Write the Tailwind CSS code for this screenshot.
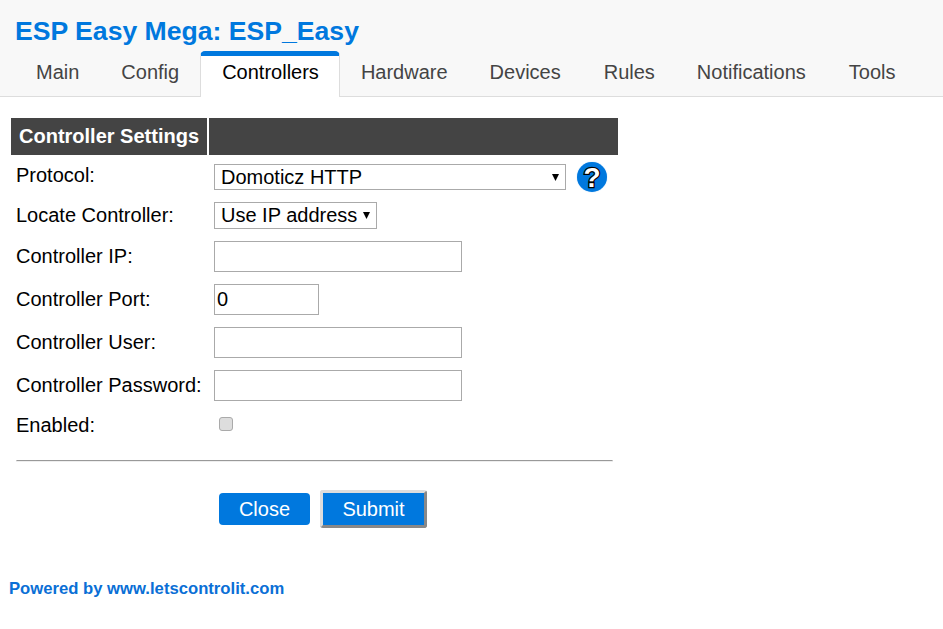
<!DOCTYPE html>
<html lang="en">
  <head>
    <meta charset="UTF-8" />
    <meta name="viewport" content="width=device-width, initial-scale=1.0" />
    <title>ESP Easy Mega: ESP_Easy</title>
    <script src="https://cdn.jsdelivr.net/npm/@tailwindcss/browser@4"></script>
  </head>
  <body class="bg-white text-[20px] leading-[23px] text-black font-['Liberation_Sans',Arial,sans-serif]">
    <header class="h-[97px] bg-[#f8f8f8] border-b border-[#ddd]">
      <h1 class="pl-[15px] pt-[15px] text-[26.6px] leading-[32px] font-bold text-[#0078de]">ESP Easy Mega: ESP_Easy</h1>
      <nav class="flex pl-[15px] mt-[4px] h-[46px] text-[#444]">
        <a class="px-[21px] pt-[10px]">Main</a>
        <a class="px-[21px] pt-[10px]">Config</a>
        <a class="h-[46px] pl-[21px] pr-[20px] pt-[5px] bg-white text-black border-x border-[#ddd] border-t-[5px] border-t-[#0078de] rounded-t-[5px]">Controllers</a>
        <a class="px-[21px] pt-[10px]">Hardware</a>
        <a class="pl-[21px] pr-[22px] pt-[10px]">Devices</a>
        <a class="px-[21px] pt-[10px]">Rules</a>
        <a class="pl-[21px] pr-[22px] pt-[10px]">Notifications</a>
        <a class="px-[21px] pt-[10px]">Tools</a>
      </nav>
    </header>

    <main class="pl-[11px] pt-[21px] w-[618px]">
      <div class="flex gap-[2px] h-[37px] w-[607px] text-white font-bold">
        <div class="w-[196px] pl-[8px] pt-[7px] bg-[#444]">Controller Settings</div>
        <div class="flex-1 bg-[#444]"></div>
      </div>

      <div class="pl-[5px]">
        <div class="flex mt-[9px] h-[26px]">
          <label class="w-[198px]">Protocol:</label>
          <div class="relative w-[352px] h-[26px]">
            <select class="w-full h-full pl-[6px] appearance-none border border-[#aaa] bg-white">
              <option>Domoticz HTTP</option>
            </select>
            <svg class="absolute right-[7px] top-[10px]" width="7" height="7" viewBox="0 0 7 7"><path d="M0 0h7L3.5 7z" fill="#000" /></svg>
          </div>
          <span class="ml-[11px] -mt-[2px] flex items-center justify-center w-[30px] h-[30px] rounded-full bg-[#0078de] shadow-[0_0_1px_#7fbcef] text-white text-[28px] font-bold [-webkit-text-stroke:2.5px_black] [paint-order:stroke_fill]">?</span>
        </div>

        <div class="flex mt-[12px] h-[27px]">
          <label class="w-[198px] pt-[2px]">Locate Controller:</label>
          <div class="relative w-[163px] h-[27px]">
            <select class="w-full h-full pl-[6px] appearance-none border border-[#aaa] bg-white">
              <option>Use IP address</option>
            </select>
            <svg class="absolute right-[7px] top-[10px]" width="7" height="7" viewBox="0 0 7 7"><path d="M0 0h7L3.5 7z" fill="#000" /></svg>
          </div>
        </div>

        <div class="flex mt-[12px] h-[31px] items-center">
          <label class="w-[198px]">Controller IP:</label>
          <input type="text" class="w-[248px] h-[31px] px-[2px] border border-[#aaa]" />
        </div>

        <div class="flex mt-[12px] h-[31px] items-center">
          <label class="w-[198px]">Controller Port:</label>
          <input type="text" value="0" class="w-[105px] h-[31px] px-[2px] border border-[#aaa]" />
        </div>

        <div class="flex mt-[12px] h-[31px] items-center">
          <label class="w-[198px]">Controller User:</label>
          <input type="text" class="w-[248px] h-[31px] px-[2px] border border-[#aaa]" />
        </div>

        <div class="flex mt-[12px] h-[31px] items-center">
          <label class="w-[198px]">Controller Password:</label>
          <input type="password" class="w-[248px] h-[31px] px-[2px] border border-[#aaa]" />
        </div>

        <div class="flex mt-[12px] h-[24px] items-center">
          <label class="w-[198px]">Enabled:</label>
          <span class="ml-[5px] -mt-[2px] w-[14px] h-[14px] rounded-[3px] border border-[#aaa] bg-[#ddd]"></span>
        </div>

        <hr class="mt-[23px] w-[597px] h-[2px] border-t border-t-[#999] border-x border-x-[#eee] border-b border-b-[#eee]" />

        <div class="flex mt-[31px] ml-[203px] gap-[10px] h-[32px]">
          <button class="w-[91px] h-[32px] rounded-[4px] bg-[#0078de] text-white">Close</button>
          <button class="w-[107px] h-[38px] -mt-[3px] rounded-[3px] bg-[#0078de] bg-clip-padding text-white border-[3px] border-t-[#ddd] border-l-[#ddd] border-r-[#888] border-b-[#888]">Submit</button>
        </div>
      </div>
    </main>

    <footer class="pl-[9px] mt-[52px] text-[#0a6fd6] text-[16.67px] font-bold">Powered by www.letscontrolit.com</footer>
  </body>
</html>
